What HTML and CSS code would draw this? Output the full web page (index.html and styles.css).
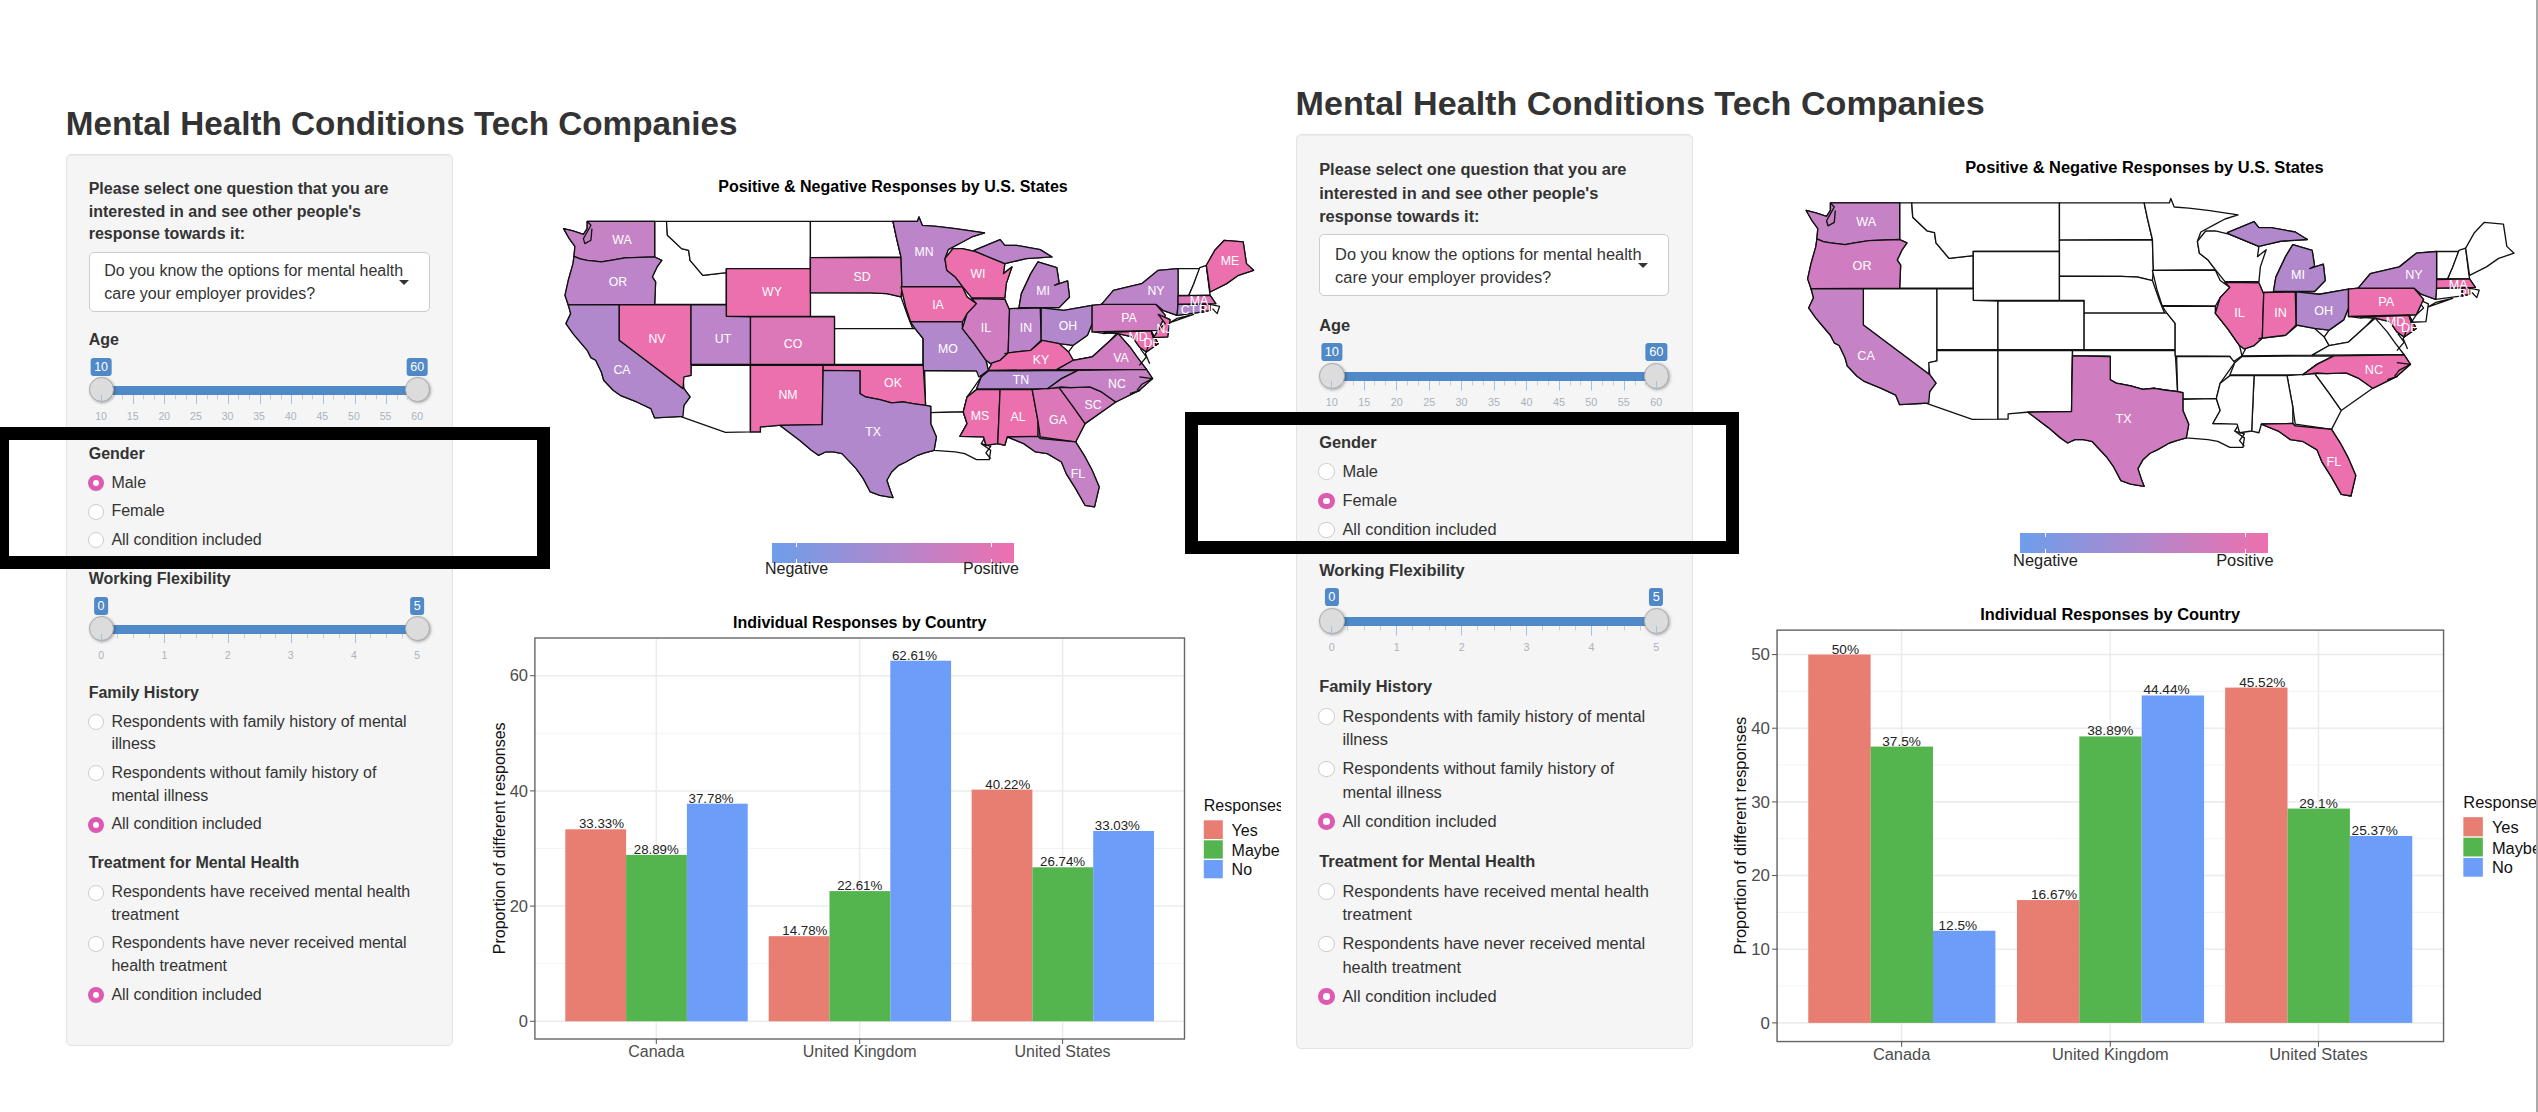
FILE: index.html
```html
<!doctype html>
<html lang="en">
  <head>
    <meta charset="UTF-8" />
    <meta name="viewport" content="width=device-width, initial-scale=1.0" />
    <title>Mental Health Conditions Tech Companies</title>
    <link rel="stylesheet" href="styles.css">
  </head>
  <body>
    <!-- State outlines, shared by both maps -->
    <svg class="svg-defs" aria-hidden="true">
      <defs>
        <g id="us-states">
          <path id="st-wa" d="M100 183L243 183L243 290L215 291L180 293L150 300L130 305L100 300L85 296L72 288L74 258L62 235L50 205L70 212L92 222L100 205Z" />
          <path id="st-or" d="M72 288L85 296L100 300L130 305L150 300L180 293L243 290L258 300L248 320L238 350L245 365L243 432L60 434L53 405L60 360L70 310Z" />
          <path id="st-ca" d="M60 434L168 434L168 540L305 685L318 710L305 735L303 768L243 773L235 745L205 725L170 705L155 690L135 660L130 635L118 600L108 592L100 570L82 540L70 520L55 490L65 460Z" />
          <path id="st-nv" d="M168 434L320 434L320 645L305 650L303 685L168 540Z" />
          <path id="st-id" d="M243 183L268 183L270 225L300 265L315 270L318 300L345 345L395 337L395 432L243 432L245 365L238 350L248 320L258 300L243 290Z" />
          <path id="st-mt" d="M268 183L573 183L573 325L395 325L395 337L345 345L318 300L315 270L300 265L270 225Z" />
          <path id="st-wy" d="M395 325L573 325L573 468L395 468Z" />
          <path id="st-ut" d="M320 434L395 434L395 468L446 470L446 612L320 612Z" />
          <path id="st-co" d="M446 470L624 470L624 612L446 612Z" />
          <path id="st-az" d="M320 615L446 615L446 815L393 816L300 770L305 735L318 710L305 685L303 650L320 645Z" />
          <path id="st-nm" d="M446 615L600 615L598 793L505 795L467 800L467 815L446 815Z" />
          <path id="st-nd" d="M573 183L748 183L755 230L765 290L573 292Z" />
          <path id="st-sd" d="M573 292L765 292L767 380L765 410L735 400L700 398L573 397Z" />
          <path id="st-ne" d="M573 397L700 398L735 400L765 410L780 470L790 505L624 505L624 468L573 468Z" />
          <path id="st-ks" d="M624 505L795 505L812 535L812 612L624 612Z" />
          <path id="st-ok" d="M600 615L812 615L817 735L790 730L770 725L745 728L720 718L690 710L678 700L678 632L600 630Z" />
          <path id="st-tx" d="M600 630L678 632L678 700L690 710L720 718L745 728L770 725L790 730L817 735L828 738L828 790L840 830L835 870L815 878L800 885L775 905L760 915L745 935L735 960L742 990L748 1012L720 1005L700 995L685 955L670 925L640 880L622 875L605 875L590 885L575 870L550 840L508 795L598 793Z" />
          <path id="st-mn" d="M748 183L800 183L803 170L810 195L840 198L880 205L942 218L915 230L895 245L865 268L858 295L862 330L880 350L895 378L767 380L765 290L755 230Z" />
          <path id="st-ia" d="M765 380L895 380L905 410L925 430L905 460L895 485L785 483L775 440Z" />
          <path id="st-mo" d="M785 485L895 485L895 505L920 550L945 600L950 630L930 650L925 632L812 630L812 535L795 505Z" />
          <path id="st-ar" d="M815 632L925 632L935 650L915 690L905 710L897 755L828 757L828 738L817 735Z" />
          <path id="st-la" d="M828 757L897 755L905 790L890 828L945 827L935 850L955 870L952 898L925 898L900 880L880 875L835 870L840 830L828 790Z" />
          <path id="st-wi" d="M858 295L875 265L895 265L925 275L985 310L982 340L1000 320L988 370L985 413L915 413L895 378L880 350L862 330Z" />
          <path id="st-il" d="M915 415L985 417L995 450L992 578L975 600L955 610L945 600L920 550L895 505L905 460L925 430Z" />
          <path id="st-mi" d="M1015 442L1020 400L1040 340L1055 305L1095 322L1100 368L1090 375L1118 362L1122 410L1100 442ZM920 270L975 238L985 255L1010 255L1060 268L1085 290L1030 295L1000 305L985 310L925 275Z" />
          <path id="st-in" d="M995 445L1060 443L1062 540L1040 570L1010 575L985 580L992 578Z" />
          <path id="st-oh" d="M1062 443L1110 450L1170 435L1170 490L1160 525L1130 555L1100 550L1062 540Z" />
          <path id="st-ky" d="M950 630L958 608L975 600L992 578L1010 575L1040 570L1065 540L1100 550L1120 575L1130 600L1095 628Z" />
          <path id="st-tn" d="M925 686L935 650L950 632L1140 630L1105 655L1075 686Z" />
          <path id="st-wv" d="M1120 575L1130 555L1160 525L1170 490L1175 515L1195 520L1225 515L1205 545L1170 590L1130 600Z" />
          <path id="st-va" d="M1095 628L1130 600L1170 590L1205 545L1225 520L1250 560L1265 590L1285 627Z" />
          <path id="st-nc" d="M1075 686L1105 655L1140 630L1285 627L1298 655L1270 690L1220 725L1190 695L1165 680L1125 682L1105 680Z" />
          <path id="st-sc" d="M1100 682L1125 682L1165 680L1190 695L1220 725L1155 790L1130 740Z" />
          <path id="st-ga" d="M1043 688L1100 682L1130 740L1155 790L1135 845L1060 830L1055 780Z" />
          <path id="st-al" d="M975 688L1043 688L1055 780L1055 828L990 830L985 855L970 850Z" />
          <path id="st-ms" d="M925 688L975 688L970 850L945 855L940 830L890 828L905 790L897 755L905 710Z" />
          <path id="st-fl" d="M990 830L1055 828L1060 835L1135 845L1155 890L1170 930L1185 980L1175 1040L1155 1035L1135 985L1115 940L1105 905L1075 880L1050 875L1025 850Z" />
          <path id="st-pa" d="M1170 435L1190 432L1305 432L1325 465L1310 510L1170 515Z" />
          <path id="st-ny" d="M1190 432L1215 390L1275 370L1310 330L1352 325L1352 430L1350 465L1320 450L1305 432Z" />
          <path id="st-nj" d="M1310 462L1335 478L1330 530L1300 532L1310 510L1325 490Z" />
          <path id="st-vt" d="M1352 325L1398 325L1385 372L1375 405L1352 405Z" />
          <path id="st-nh" d="M1398 322L1412 315L1418 385L1420 405L1375 405L1385 372Z" />
          <path id="st-me" d="M1412 315L1430 270L1450 240L1490 245L1497 310L1512 330L1480 345L1455 370L1420 395Z" />
          <path id="st-ma" d="M1352 407L1420 405L1432 430L1352 432Z" />
          <path id="st-ct" d="M1352 432L1405 432L1405 455L1350 465Z" />
          <path id="st-ri" d="M1405 432L1420 432L1420 450L1405 455Z" />
          <path id="st-md" d="M1195 517L1295 512L1305 555L1285 575L1270 560L1255 530L1225 520Z" />
          <path id="st-de" d="M1295 512L1310 550L1305 555Z" />
        </g>
        <g id="us-coast">
          <path d="M100 183L108 195L100 215L92 235L95 250L108 240L110 205" />
          <path d="M1335 487L1385 462L1350 474Z" />
          <path d="M1420 432L1440 438L1435 460L1425 445" />
          <path d="M1272 565L1285 590L1270 615M1290 555L1283 580L1292 610" />
          <path d="M1270 650L1298 655L1275 672L1265 690M1250 700L1272 690" />
          <path d="M935 850L955 858L945 878L955 895" />
        </g>
      </defs>
    </svg>

    <div class="page">
      <section class="screen screen-left">
        <h1 class="app-title">Mental Health Conditions Tech Companies</h1>
        <div class="layout">
          <form class="panel">
            <div class="field">
              <label class="field-label">Please select one question that you are interested in and see other people's response towards it:</label>
              <div class="select-box">Do you know the options for mental health care your employer provides?</div>
            </div>

            <div class="field">
              <label class="field-label">Age</label>
              <div class="slider slider-age">
                <span class="slider-badge badge-from">10</span>
                <span class="slider-badge badge-to">60</span>
                <div class="slider-bar"></div>
                <span class="slider-handle handle-from"></span>
                <span class="slider-handle handle-to"></span>
                <div class="slider-ticks"></div>
                <div class="slider-labels">
                  <span>10</span><span>15</span><span>20</span><span>25</span><span>30</span><span>35</span><span>40</span><span>45</span><span>50</span><span>55</span><span>60</span>
                </div>
              </div>
            </div>

            <div class="field">
              <label class="field-label">Gender</label>
              <label class="radio-row"><input type="radio" name="gender-a" checked />Male</label>
              <label class="radio-row"><input type="radio" name="gender-a" />Female</label>
              <label class="radio-row"><input type="radio" name="gender-a" />All condition included</label>
            </div>

            <div class="field">
              <label class="field-label">Working Flexibility</label>
              <div class="slider slider-work">
                <span class="slider-badge badge-from">0</span>
                <span class="slider-badge badge-to">5</span>
                <div class="slider-bar"></div>
                <span class="slider-handle handle-from"></span>
                <span class="slider-handle handle-to"></span>
                <div class="slider-ticks"></div>
                <div class="slider-labels">
                  <span>0</span><span>1</span><span>2</span><span>3</span><span>4</span><span>5</span>
                </div>
              </div>
            </div>

            <div class="field">
              <label class="field-label">Family History</label>
              <label class="radio-row"><input type="radio" name="family-a" />Respondents with family history of mental illness</label>
              <label class="radio-row"><input type="radio" name="family-a" />Respondents without family history of mental illness</label>
              <label class="radio-row"><input type="radio" name="family-a" checked />All condition included</label>
            </div>

            <div class="field">
              <label class="field-label">Treatment for Mental Health</label>
              <label class="radio-row"><input type="radio" name="treatment-a" />Respondents have received mental health treatment</label>
              <label class="radio-row"><input type="radio" name="treatment-a" />Respondents have never received mental health treatment</label>
              <label class="radio-row"><input type="radio" name="treatment-a" checked />All condition included</label>
            </div>
          </form>

          <div class="charts">
            <div class="map-chart">
              <h2 class="chart-title">Positive &amp; Negative Responses by U.S. States</h2>
              <svg class="state-map" viewBox="0 36.7 740 334">
                <g transform="scale(.47192 .33333)">
                  <use href="#us-states" class="blank" />
                  <use href="#st-wa" class="s3" /><use href="#st-or" class="s2" /><use href="#st-ca" class="s1" />
                  <use href="#st-nv" class="s6" /><use href="#st-ut" class="s2" /><use href="#st-wy" class="s6" />
                  <use href="#st-co" class="s5" /><use href="#st-nm" class="s6" /><use href="#st-sd" class="s5" />
                  <use href="#st-mn" class="s2" /><use href="#st-ia" class="s6" /><use href="#st-mo" class="s1" />
                  <use href="#st-ok" class="s6" /><use href="#st-tx" class="s1" /><use href="#st-wi" class="s6" />
                  <use href="#st-il" class="s4" /><use href="#st-in" class="s2" /><use href="#st-mi" class="s2" />
                  <use href="#st-oh" class="s1" /><use href="#st-ky" class="s6" /><use href="#st-tn" class="s1" />
                  <use href="#st-ms" class="s6" /><use href="#st-al" class="s6" /><use href="#st-ga" class="s5" />
                  <use href="#st-sc" class="s4" /><use href="#st-nc" class="s3" /><use href="#st-va" class="s4" />
                  <use href="#st-pa" class="s4" /><use href="#st-ny" class="s2" /><use href="#st-me" class="s6" />
                  <use href="#st-ma" class="s5" /><use href="#st-ct" class="s1" /><use href="#st-ri" class="s6" />
                  <use href="#st-nj" class="s6" /><use href="#st-md" class="s6" /><use href="#st-de" class="s6" />
                  <use href="#st-fl" class="s3" />
                  <use href="#us-coast" class="coast" />
                </g>
                <g class="state-labels">
                  <text x="82" y="80">WA</text><text x="78" y="122">OR</text><text x="82" y="210">CA</text>
                  <text x="117" y="179">NV</text><text x="183" y="179">UT</text><text x="232" y="132">WY</text>
                  <text x="253" y="184">CO</text><text x="248" y="235">NM</text><text x="322" y="117">SD</text>
                  <text x="384" y="92">MN</text><text x="398" y="145">IA</text><text x="408" y="189">MO</text>
                  <text x="353" y="223">OK</text><text x="333" y="272">TX</text><text x="438" y="114">WI</text>
                  <text x="446" y="168">IL</text><text x="486" y="168">IN</text><text x="503" y="131">MI</text>
                  <text x="528" y="166">OH</text><text x="501" y="200">KY</text><text x="481" y="220">TN</text>
                  <text x="440" y="256">MS</text><text x="478" y="257">AL</text><text x="518" y="260">GA</text>
                  <text x="553" y="245">SC</text><text x="577" y="224">NC</text><text x="581" y="198">VA</text>
                  <text x="589" y="158">PA</text><text x="616" y="131">NY</text><text x="690" y="101">ME</text>
                  <text x="659" y="141">MA</text><text x="649" y="150">CT</text><text x="665" y="150">RI</text>
                  <text x="624" y="169">NJ</text><text x="598" y="177">MD</text><text x="612" y="183">DE</text>
                  <text x="538" y="314">FL</text>
                </g>
              </svg>
              <div class="map-legend">
                <div class="legend-ramp"></div>
                <div class="legend-ends"><span>Negative</span><span>Positive</span></div>
              </div>
            </div>

            <div class="bar-chart">
              <h2 class="chart-title">Individual Responses by Country</h2>
              <svg class="bars" viewBox="0 0 791 440">
                <g class="grid-minor">
                  <line x1="45" x2="694" y1="330.7" y2="330.7" /><line x1="45" x2="694" y1="215.5" y2="215.5" /><line x1="45" x2="694" y1="100.3" y2="100.3" />
                </g>
                <g class="grid-major">
                  <line x1="45" x2="694" y1="388.3" y2="388.3" /><line x1="45" x2="694" y1="273.1" y2="273.1" /><line x1="45" x2="694" y1="157.9" y2="157.9" /><line x1="45" x2="694" y1="42.7" y2="42.7" />
                  <line x1="166.3" x2="166.3" y1="5" y2="406" /><line x1="369.7" x2="369.7" y1="5" y2="406" /><line x1="572.6" x2="572.6" y1="5" y2="406" />
                </g>
                <g class="bar-yes">
                  <rect x="75.3" y="196.3" width="60.8" height="192" /><rect x="278.7" y="303.2" width="60.8" height="85.1" /><rect x="481.6" y="156.6" width="60.8" height="231.7" />
                </g>
                <g class="bar-maybe">
                  <rect x="136.1" y="221.9" width="60.8" height="166.4" /><rect x="339.5" y="258.1" width="60.8" height="130.2" /><rect x="542.4" y="234.3" width="60.8" height="154" />
                </g>
                <g class="bar-no">
                  <rect x="196.9" y="170.7" width="60.8" height="217.6" /><rect x="400.3" y="27.7" width="60.8" height="360.6" /><rect x="603.2" y="198" width="60.8" height="190.3" />
                </g>
                <g class="bar-values">
                  <text x="111.5" y="195.3">33.33%</text><text x="166.3" y="220.9">28.89%</text><text x="221.1" y="169.7">37.78%</text>
                  <text x="314.9" y="302.2">14.78%</text><text x="369.7" y="257.1">22.61%</text><text x="424.5" y="26.7">62.61%</text>
                  <text x="517.8" y="155.6">40.22%</text><text x="572.6" y="233.3">26.74%</text><text x="627.4" y="197">33.03%</text>
                </g>
                <rect class="plot-frame" x="44.9" y="5" width="649.6" height="401" />
                <g class="axis-ticks">
                  <line x1="40" x2="45" y1="388.3" y2="388.3" /><line x1="40" x2="45" y1="273.1" y2="273.1" /><line x1="40" x2="45" y1="157.9" y2="157.9" /><line x1="40" x2="45" y1="42.7" y2="42.7" />
                  <line x1="166.3" x2="166.3" y1="406" y2="411" /><line x1="369.7" x2="369.7" y1="406" y2="411" /><line x1="572.6" x2="572.6" y1="406" y2="411" />
                </g>
                <g class="axis-y">
                  <text x="38" y="394">0</text><text x="38" y="279">20</text><text x="38" y="164">40</text><text x="38" y="48">60</text>
                </g>
                <g class="axis-x">
                  <text x="166.3" y="424">Canada</text><text x="369.7" y="424">United Kingdom</text><text x="572.6" y="424">United States</text>
                </g>
                <text class="axis-title" transform="translate(14.5 205.3) rotate(-90)">Proportion of different responses</text>
                <g class="bars-legend">
                  <text class="legend-title" x="713.8" y="178">Responses</text>
                  <rect class="bar-yes" x="713.8" y="187.3" width="19" height="18.7" /><text x="741.6" y="203">Yes</text>
                  <rect class="bar-maybe" x="713.8" y="207.3" width="19" height="18.3" /><text x="741.6" y="223">Maybe</text>
                  <rect class="bar-no" x="713.8" y="227" width="19" height="18.3" /><text x="741.6" y="242">No</text>
                </g>
              </svg>
            </div>
          </div>
        </div>
      </section>

      <section class="screen screen-right">
        <h1 class="app-title">Mental Health Conditions Tech Companies</h1>
        <div class="layout">
          <form class="panel">
            <div class="field">
              <label class="field-label">Please select one question that you are interested in and see other people's response towards it:</label>
              <div class="select-box">Do you know the options for mental health care your employer provides?</div>
            </div>

            <div class="field">
              <label class="field-label">Age</label>
              <div class="slider slider-age">
                <span class="slider-badge badge-from">10</span>
                <span class="slider-badge badge-to">60</span>
                <div class="slider-bar"></div>
                <span class="slider-handle handle-from"></span>
                <span class="slider-handle handle-to"></span>
                <div class="slider-ticks"></div>
                <div class="slider-labels">
                  <span>10</span><span>15</span><span>20</span><span>25</span><span>30</span><span>35</span><span>40</span><span>45</span><span>50</span><span>55</span><span>60</span>
                </div>
              </div>
            </div>

            <div class="field">
              <label class="field-label">Gender</label>
              <label class="radio-row"><input type="radio" name="gender-b" />Male</label>
              <label class="radio-row"><input type="radio" name="gender-b" checked />Female</label>
              <label class="radio-row"><input type="radio" name="gender-b" />All condition included</label>
            </div>

            <div class="field">
              <label class="field-label">Working Flexibility</label>
              <div class="slider slider-work">
                <span class="slider-badge badge-from">0</span>
                <span class="slider-badge badge-to">5</span>
                <div class="slider-bar"></div>
                <span class="slider-handle handle-from"></span>
                <span class="slider-handle handle-to"></span>
                <div class="slider-ticks"></div>
                <div class="slider-labels">
                  <span>0</span><span>1</span><span>2</span><span>3</span><span>4</span><span>5</span>
                </div>
              </div>
            </div>

            <div class="field">
              <label class="field-label">Family History</label>
              <label class="radio-row"><input type="radio" name="family-b" />Respondents with family history of mental illness</label>
              <label class="radio-row"><input type="radio" name="family-b" />Respondents without family history of mental illness</label>
              <label class="radio-row"><input type="radio" name="family-b" checked />All condition included</label>
            </div>

            <div class="field">
              <label class="field-label">Treatment for Mental Health</label>
              <label class="radio-row"><input type="radio" name="treatment-b" />Respondents have received mental health treatment</label>
              <label class="radio-row"><input type="radio" name="treatment-b" />Respondents have never received mental health treatment</label>
              <label class="radio-row"><input type="radio" name="treatment-b" checked />All condition included</label>
            </div>
          </form>

          <div class="charts">
            <div class="map-chart">
              <h2 class="chart-title">Positive &amp; Negative Responses by U.S. States</h2>
              <svg class="state-map" viewBox="0 36.7 740 334">
                <g transform="scale(.47192 .33333)">
                  <use href="#us-states" class="blank" />
                  <use href="#st-wa" class="s3" /><use href="#st-or" class="s4" /><use href="#st-ca" class="s3" />
                  <use href="#st-tx" class="s4" /><use href="#st-il" class="s6" /><use href="#st-in" class="s6" />
                  <use href="#st-mi" class="s1" /><use href="#st-oh" class="s1" /><use href="#st-pa" class="s6" />
                  <use href="#st-ny" class="s2" /><use href="#st-ma" class="s6" /><use href="#st-ri" class="s6" />
                  <use href="#st-md" class="s6" /><use href="#st-de" class="s6" /><use href="#st-nc" class="s6" />
                  <use href="#st-fl" class="s6" />
                  <use href="#us-coast" class="coast" />
                </g>
                <g class="state-labels">
                  <text x="82" y="80">WA</text><text x="78" y="122">OR</text><text x="82" y="210">CA</text>
                  <text x="333" y="272">TX</text><text x="446" y="168">IL</text><text x="486" y="168">IN</text>
                  <text x="503" y="131">MI</text><text x="528" y="166">OH</text><text x="577" y="224">NC</text>
                  <text x="589" y="158">PA</text><text x="616" y="131">NY</text><text x="659" y="141">MA</text>
                  <text x="665" y="150">RI</text><text x="598" y="177">MD</text><text x="612" y="183">DE</text>
                  <text x="538" y="314">FL</text>
                </g>
              </svg>
              <div class="map-legend">
                <div class="legend-ramp"></div>
                <div class="legend-ends"><span>Negative</span><span>Positive</span></div>
              </div>
            </div>

            <div class="bar-chart">
              <h2 class="chart-title">Individual Responses by Country</h2>
              <svg class="bars" viewBox="0 0 791 440">
                <g class="grid-minor">
                  <line x1="45" x2="694" y1="351.9" y2="351.9" /><line x1="45" x2="694" y1="280.1" y2="280.1" /><line x1="45" x2="694" y1="208.3" y2="208.3" /><line x1="45" x2="694" y1="136.5" y2="136.5" /><line x1="45" x2="694" y1="64.7" y2="64.7" />
                </g>
                <g class="grid-major">
                  <line x1="45" x2="694" y1="387.8" y2="387.8" /><line x1="45" x2="694" y1="316" y2="316" /><line x1="45" x2="694" y1="244.2" y2="244.2" /><line x1="45" x2="694" y1="172.4" y2="172.4" /><line x1="45" x2="694" y1="100.6" y2="100.6" /><line x1="45" x2="694" y1="28.8" y2="28.8" />
                  <line x1="166.3" x2="166.3" y1="5" y2="406" /><line x1="369.7" x2="369.7" y1="5" y2="406" /><line x1="572.6" x2="572.6" y1="5" y2="406" />
                </g>
                <g class="bar-yes">
                  <rect x="75.3" y="28.8" width="60.8" height="359" /><rect x="278.7" y="268.1" width="60.8" height="119.7" /><rect x="481.6" y="61" width="60.8" height="326.8" />
                </g>
                <g class="bar-maybe">
                  <rect x="136.1" y="118.5" width="60.8" height="269.3" /><rect x="339.5" y="108.6" width="60.8" height="279.2" /><rect x="542.4" y="178.9" width="60.8" height="208.9" />
                </g>
                <g class="bar-no">
                  <rect x="196.9" y="298" width="60.8" height="89.8" /><rect x="400.3" y="68.7" width="60.8" height="319.1" /><rect x="603.2" y="205.6" width="60.8" height="182.2" />
                </g>
                <g class="bar-values">
                  <text x="111.5" y="27.8">50%</text><text x="166.3" y="117.5">37.5%</text><text x="221.1" y="297">12.5%</text>
                  <text x="314.9" y="267.1">16.67%</text><text x="369.7" y="107.6">38.89%</text><text x="424.5" y="67.7">44.44%</text>
                  <text x="517.8" y="60">45.52%</text><text x="572.6" y="177.9">29.1%</text><text x="627.4" y="204.6">25.37%</text>
                </g>
                <rect class="plot-frame" x="44.9" y="5" width="649.6" height="401" />
                <g class="axis-ticks">
                  <line x1="40" x2="45" y1="387.8" y2="387.8" /><line x1="40" x2="45" y1="316" y2="316" /><line x1="40" x2="45" y1="244.2" y2="244.2" /><line x1="40" x2="45" y1="172.4" y2="172.4" /><line x1="40" x2="45" y1="100.6" y2="100.6" /><line x1="40" x2="45" y1="28.8" y2="28.8" />
                  <line x1="166.3" x2="166.3" y1="406" y2="411" /><line x1="369.7" x2="369.7" y1="406" y2="411" /><line x1="572.6" x2="572.6" y1="406" y2="411" />
                </g>
                <g class="axis-y">
                  <text x="38" y="393.5">0</text><text x="38" y="321.7">10</text><text x="38" y="249.9">20</text><text x="38" y="178.1">30</text><text x="38" y="106.3">40</text><text x="38" y="34.5">50</text>
                </g>
                <g class="axis-x">
                  <text x="166.3" y="424">Canada</text><text x="369.7" y="424">United Kingdom</text><text x="572.6" y="424">United States</text>
                </g>
                <text class="axis-title" transform="translate(14.5 205.3) rotate(-90)">Proportion of different responses</text>
                <g class="bars-legend">
                  <text class="legend-title" x="713.8" y="178">Responses</text>
                  <rect class="bar-yes" x="713.8" y="187.3" width="19" height="18.7" /><text x="741.6" y="203">Yes</text>
                  <rect class="bar-maybe" x="713.8" y="207.3" width="19" height="18.3" /><text x="741.6" y="223">Maybe</text>
                  <rect class="bar-no" x="713.8" y="227" width="19" height="18.3" /><text x="741.6" y="242">No</text>
                </g>
              </svg>
            </div>
          </div>
        </div>
      </section>

      <!-- Black marker boxes drawn over the screenshots -->
      <div class="mark mark-left"></div>
      <div class="mark mark-right"></div>
    </div>
  </body>
</html>
```

FILE: styles.css
```css
/* Reset default browser styles */
body,
h1,
h2 {
  margin: 0;
  padding: 0;
}

body {
  font-family: "Liberation Sans", Arial, sans-serif;
  font-size: 16px;
  line-height: 22.7px;
  background-color: #fff;
  color: #333;
  overflow: hidden;
}

.svg-defs {
  position: absolute;
  width: 0;
  height: 0;
}

.page {
  position: relative;
  display: flex;
  box-sizing: border-box;
  width: 2538px;
  height: 1112px;
  border-right: 2px solid #aaa;
  overflow: hidden;
}

/* The two side by side views */
.screen {
  flex: none;
  box-sizing: border-box;
}

.screen-left {
  width: 1281px;
  padding: 106.4px 0 0 65.7px;
}

.screen-right {
  zoom: 1.026;
  padding: 82.8px 0 0 14.2px;
}

.app-title {
  font-size: 33.25px;
  line-height: 36px;
  font-weight: 700;
  margin-bottom: 11.6px;
  white-space: nowrap;
}

.layout {
  display: flex;
  align-items: flex-start;
  gap: 37.3px;
}

/* Sidebar */
.panel {
  flex: none;
  box-sizing: border-box;
  width: 387px;
  padding: 23px 22px 22.6px;
  background-color: #f5f5f5;
  border: 1px solid #e3e3e3;
  border-radius: 5px;
  box-shadow: inset 0 1px 1px rgba(0, 0, 0, 0.05);
}

.field {
  margin-bottom: 16.6px;
}

.field:first-child {
  margin-bottom: 17.4px;
}

.field-label {
  display: block;
  font-weight: 700;
  margin-bottom: 6px;
}

.select-box {
  position: relative;
  box-sizing: border-box;
  height: 60px;
  padding: 7.4px 20px 0 14.6px;
  background-color: #fff;
  border: 1px solid #ccc;
  border-radius: 5px;
}

.select-box::after {
  content: '';
  position: absolute;
  top: 27px;
  right: 20px;
  border-style: solid;
  border-width: 5px 5px 0;
  border-color: #333 transparent transparent;
}

.radio-row {
  display: flex;
  align-items: flex-start;
  padding-right: 12px;
  margin-bottom: 5.8px;
}

.radio-row:last-child {
  margin-bottom: 0;
}

.radio-row input {
  appearance: none;
  flex: none;
  box-sizing: border-box;
  width: 16px;
  height: 16px;
  margin: 3.4px 7.7px 0 -1px;
  background-color: #fff;
  border: 1px solid #ccc;
  border-radius: 50%;
}

.radio-row input:checked {
  border: 5.5px solid #dd5ab0;
}

/* Range sliders */
.slider {
  position: relative;
  height: 68.5px;
  margin: 0 12.4px;
  font-size: 12px;
}

.slider-age {
  --major: 31.7px;
  --minor: 10.567px;
}

.slider-work {
  --major: 63.4px;
  --minor: 15.85px;
}

.slider-badge {
  position: absolute;
  top: 0;
  transform: translateX(-50%);
  padding: 0 3.4px;
  height: 17.7px;
  line-height: 18px;
  font-size: 12.5px;
  color: #fff;
  background-color: #4f89c8;
  border-radius: 3px;
}

.badge-from {
  left: 0;
}

.badge-to {
  left: 100%;
}

.slider-bar {
  position: absolute;
  top: 28.3px;
  left: 0;
  right: 0;
  height: 9px;
  background-color: #4f89c8;
}

.slider-handle {
  position: absolute;
  top: 19.3px;
  box-sizing: border-box;
  width: 25px;
  height: 25px;
  margin-left: -12.5px;
  background-color: #dcdcdc;
  border: 1px solid #aaa;
  border-radius: 50%;
  box-shadow: 1px 1px 3px rgba(0, 0, 0, 0.3);
}

.handle-from {
  left: 0;
}

.handle-to {
  left: 100%;
}

.slider-ticks {
  position: absolute;
  top: 37.3px;
  left: -0.5px;
  width: calc(100% + 1px);
  height: 9.3px;
  background:
    repeating-linear-gradient(90deg, #a3c2e3 0 1px, transparent 1px var(--major)) 0 0 / 100% 9.3px no-repeat,
    repeating-linear-gradient(90deg, #c9cdd2 0 1px, transparent 1px var(--minor)) 0 0 / 100% 4.5px no-repeat;
}

.slider-labels {
  position: absolute;
  top: 50.6px;
  left: 0;
  right: 0;
  display: flex;
  justify-content: space-between;
  line-height: 14px;
  font-size: 10.5px;
  color: #aab2bc;
}

.slider-labels span {
  display: flex;
  justify-content: center;
  width: 0;
}

/* Charts */
.charts {
  flex: none;
  width: 791px;
  padding-top: 22.7px;
}

.chart-title {
  font-size: 16px;
  line-height: 20px;
  font-weight: 700;
  color: #000;
  text-align: center;
  white-space: nowrap;
}

.map-chart {
  margin-left: 50px;
}

.map-chart .chart-title {
  width: 706px;
}

.state-map {
  display: block;
  width: 740px;
  height: 334px;
  overflow: visible;
}

.state-map use {
  stroke: #111;
  stroke-width: 1.3px;
  stroke-linejoin: round;
}

#us-states path,
#us-coast path {
  vector-effect: non-scaling-stroke;
}

.blank {
  fill: #fff;
}

.coast {
  fill: none;
}

.s1 { fill: #b288cd; }
.s2 { fill: #bc85c9; }
.s3 { fill: #c582c5; }
.s4 { fill: #cf7dc0; }
.s5 { fill: #dd78b8; }
.s6 { fill: #ec70ae; }

.state-labels text {
  font-size: 12.3px;
  fill: #fff;
  text-anchor: middle;
  dominant-baseline: central;
}

.map-legend {
  margin: 12.6px 0 0 232px;
  width: 242px;
}

.legend-ramp {
  height: 19.4px;
  background:
    linear-gradient(#fff, #fff) 23.8px 0 / 1px 4px no-repeat,
    linear-gradient(#fff, #fff) 219px 0 / 1px 4px no-repeat,
    linear-gradient(#fff, #fff) 23.8px 100% / 1px 4px no-repeat,
    linear-gradient(#fff, #fff) 219px 100% / 1px 4px no-repeat,
    linear-gradient(90deg, #6d9eeb, #b088cc 50%, #ee6fae);
}

.legend-ends {
  display: flex;
  justify-content: space-between;
  width: 254px;
  margin: -2.4px 0 0 -7px;
  line-height: 18px;
  color: #222;
}

.bar-chart {
  margin-top: 34.4px;
}

.bar-chart .chart-title {
  width: 649.6px;
  margin-left: 44.9px;
}

.bars {
  display: block;
  width: 791px;
  height: 440px;
}

.grid-major line {
  stroke: #ececec;
  stroke-width: 1.5px;
}

.grid-minor line {
  stroke: #f3f3f3;
  stroke-width: 1px;
}

.bar-yes { fill: #e87d72; }
.bar-maybe { fill: #54b54e; }
.bar-no { fill: #6c9df8; }

.bar-values text {
  font-size: 13.3px;
  fill: #222;
  text-anchor: middle;
}

.plot-frame {
  fill: none;
  stroke: #666;
  stroke-width: 1.4px;
}

.axis-ticks line {
  stroke: #555;
  stroke-width: 1px;
}

.axis-y text {
  font-size: 16.5px;
  fill: #4d4d4d;
  text-anchor: end;
}

.axis-x text {
  font-size: 16px;
  fill: #4d4d4d;
  text-anchor: middle;
}

.axis-title {
  font-size: 16px;
  fill: #111;
  text-anchor: middle;
}

.bars-legend text {
  font-size: 16px;
  fill: #111;
}

/* Black marker boxes */
.mark {
  position: absolute;
  box-sizing: border-box;
  border: 13px solid #000;
}

.mark-left {
  left: 0;
  top: 427px;
  width: 550px;
  height: 142px;
  border-left-width: 9px;
}

.mark-right {
  left: 1185px;
  top: 412px;
  width: 554px;
  height: 142px;
}
```
